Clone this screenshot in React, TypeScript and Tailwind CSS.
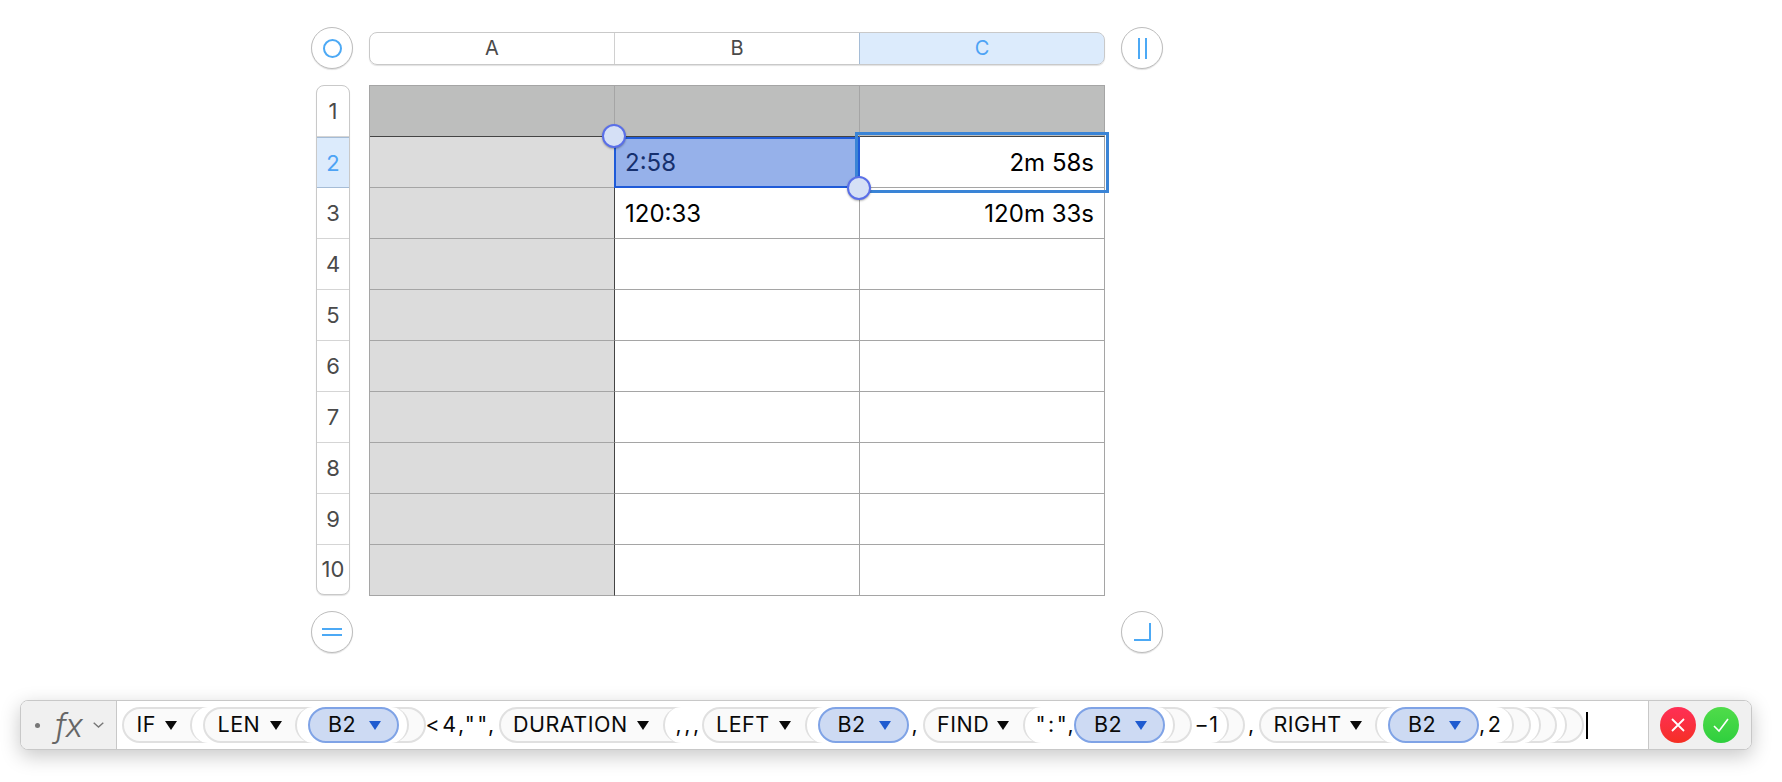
import type { ReactNode } from "react";

const rows = [1, 2, 3, 4, 5, 6, 7, 8, 9, 10];

function RoundButton({ children }: { children: ReactNode }) {
  return (
    <div className="flex h-[42px] w-[42px] items-center justify-center rounded-full border-[1.5px] border-[#bdbdbd] bg-white shadow-[0_1px_1px_rgba(0,0,0,0.12)]">
      {children}
    </div>
  );
}

function Arrow({ blue }: { blue?: boolean }) {
  return (
    <svg width="12" height="9" viewBox="0 0 12 9" className="shrink-0">
      <path d="M0 0H12L6 9Z" fill={blue ? "#1f5bd0" : "#0a0a0a"} />
    </svg>
  );
}

function Ref() {
  return (
    <div className="flex h-9 w-[91px] shrink-0 items-center rounded-full border-2 border-[#7fa3e6] bg-[#cddaf3] pl-[18px]">
      <span className="pb-[2px]">B2</span>
      <span className="ml-[13px]">
        <Arrow blue />
      </span>
    </div>
  );
}

// width is a full class so the head of each function lines up with the picture
function Fn({ name, width, children }: { name: string; width: string; children: ReactNode }) {
  return (
    <div className="flex h-9 shrink-0 items-center rounded-full border-2 border-[#e0e0e0] bg-[#fafafa] pl-[12.5px] pr-[14.5px]">
      <span className={`${width} whitespace-nowrap pb-[2px]`}>{name}</span>
      <span className="ml-3">
        <Arrow />
      </span>
      <div className="ml-[13.5px] flex h-9 items-center rounded-full border-x-2 border-[#e0e0e0] bg-white pl-[11px] pr-[8px]">
        {children}
      </div>
    </div>
  );
}

function Lit({ width, children }: { width: string; children: ReactNode }) {
  return <span className={`${width} shrink-0 whitespace-nowrap pb-[2px] tracking-[2.5px]`}>{children}</span>;
}

export default function App() {
  return (
    <div className="h-[782px] w-full overflow-hidden bg-white pt-[27px] font-['Inter','Liberation_Sans',sans-serif]">
      <div className="ml-[311px] grid w-[852px] grid-cols-[42px_736px_42px] gap-x-4">
        <RoundButton>
          <div className="h-[19px] w-[19px] rounded-full border-2 border-[#4ca9f5]" />
        </RoundButton>
        <div className="flex h-[33px] self-center overflow-hidden rounded-lg border border-[#c9c9c9] text-[20px] text-[#4a4a4a] shadow-[0_1px_1px_rgba(0,0,0,0.12)]">
          <div className="flex flex-1 items-center justify-center border-r border-[#d0d0d0]">A</div>
          <div className="flex flex-1 items-center justify-center">B</div>
          <div className="-my-px -mr-px flex flex-1 items-center justify-center rounded-r-lg border border-[#a5bcd6] bg-[#dcebfc] text-[#4da3f5]">
            C
          </div>
        </div>
        <RoundButton>
          <div className="flex h-[21px] gap-[5px]">
            <div className="w-[2px] bg-[#4ca9f5]" />
            <div className="w-[2px] bg-[#4ca9f5]" />
          </div>
        </RoundButton>

        <div className="ml-[5px] mt-4 w-[34px]">
          <div className="overflow-hidden rounded-lg border border-[#c9c9c9] bg-white text-[22px] text-[#4a4a4a] shadow-[0_1px_1px_rgba(0,0,0,0.12)]">
            {rows.map((r) =>
              r === 2 ? (
                <div
                  key={r}
                  className="-mx-px flex h-[51px] items-center justify-center border border-[#a5bcd6] bg-[#dcebfc] pt-[1px] text-[#4da3f5]"
                >
                  {r}
                </div>
              ) : (
                <div
                  key={r}
                  className="flex h-[51px] items-center justify-center border-b border-[#d5d5d5] last:h-[49px] last:border-b-0"
                >
                  {r}
                </div>
              ),
            )}
          </div>
        </div>

        <div className="relative mt-4 grid grid-cols-[245px_245px_245px] grid-rows-[repeat(10,51px)] border-l border-t border-[#a5a5a5] text-[24px] text-black">
          {rows.map((r) => (
            <div key={r} className="contents">
              <div
                className={
                  r === 1
                    ? "border-b border-r border-b-[#444] border-r-[#a5a5a5] bg-[#bdbebd]"
                    : "border-b border-r border-b-[#a5a5a5] border-r-[#444] bg-[#dcdcdc]"
                }
              />
              {r === 1 ? (
                <>
                  <div className="border-b border-r border-b-[#444] border-r-[#a5a5a5] bg-[#bdbebd]" />
                  <div className="border-b border-r border-b-[#444] border-r-[#a5a5a5] bg-[#bdbebd]" />
                </>
              ) : r === 2 ? (
                <>
                  <div className="-ml-px flex items-center border-2 border-[#1f5bd8] bg-[#96b1ea] pl-[9px] pt-[1px] text-[#16306e]">
                    2:58
                  </div>
                  <div className="flex items-center justify-end border-b border-r border-[#a5a5a5] pr-[10px] pt-[2px]">
                    2m 58s
                  </div>
                </>
              ) : (
                <>
                  <div className="flex items-center border-b border-r border-[#a5a5a5] pl-[10px] pt-[2px]">
                    {r === 3 ? "120:33" : ""}
                  </div>
                  <div className="flex items-center justify-end border-b border-r border-[#a5a5a5] pr-[10px] pt-[2px]">
                    {r === 3 ? "120m 33s" : ""}
                  </div>
                </>
              )}
            </div>
          ))}
          <div className="absolute left-[485px] top-[46px] h-[61px] w-[254px] border-[3px] border-[#3a84d6]" />
          <div className="absolute left-[232px] top-[38px] h-6 w-6 rounded-full border-2 border-[#5a6fe8] bg-[#d5e0f6] shadow-[0_1px_2px_rgba(0,0,0,0.3)]" />
          <div className="absolute left-[477px] top-[90px] h-6 w-6 rounded-full border-2 border-[#5a6fe8] bg-[#d5e0f6] shadow-[0_1px_2px_rgba(0,0,0,0.3)]" />
        </div>
        <div />

        <div className="mt-[15px]">
          <RoundButton>
            <div className="flex flex-col gap-1">
              <div className="h-[2px] w-5 bg-[#4ca9f5]" />
              <div className="h-[2px] w-5 bg-[#4ca9f5]" />
            </div>
          </RoundButton>
        </div>
        <div />
        <div className="mt-[15px]">
          <RoundButton>
            <div className="h-[18px] w-[17px] border-b-2 border-r-2 border-[#4ca9f5]" />
          </RoundButton>
        </div>
      </div>

      <div className="ml-5 mt-[47px] flex h-[50px] w-[1732px] overflow-hidden rounded-lg border border-[#c8c8c8] bg-white text-[21.5px] tracking-[0.5px] text-[#0a0a0a] shadow-[0_6px_20px_rgba(0,0,0,0.22)]">
        <div className="flex w-[96px] shrink-0 items-center border-r border-[#c8c8c8] bg-[#f0f0f0] pl-[14px]">
          <div className="h-[5px] w-[5px] rounded-full bg-[#777]" />
          <span className="ml-[15px] text-[33px] font-light italic leading-none tracking-[-1px] text-[#666]">
            fx
          </span>
          <svg width="11" height="6" viewBox="0 0 11 6" className="ml-[11px]">
            <path d="M0.7 0.7L5.5 5L10.3 0.7" fill="none" stroke="#777" strokeWidth="1.4" />
          </svg>
        </div>
        <div className="flex min-w-0 flex-1 items-center pl-[5px]">
          <Fn name="IF" width="w-[16px]">
            <Fn name="LEN" width="w-[40px]">
              <Ref />
            </Fn>
            <Lit width="w-[73px]">{'<4,"",'}</Lit>
            <Fn name="DURATION" width="w-[112px]">
              <Lit width="w-[26px]">,,,</Lit>
              <Fn name="LEFT" width="w-[51px]">
                <Ref />
                <Lit width="w-[14px] pl-[3px]">,</Lit>
                <Fn name="FIND" width="w-[48px]">
                  <Lit width="w-[38.5px]">{'":",'}</Lit>
                  <Ref />
                </Fn>
                <span className="w-[27px] shrink-0 pb-[2px] pl-[3px]">−1</span>
              </Fn>
              <Lit width="w-[14px] pl-[3px]">,</Lit>
              <Fn name="RIGHT" width="w-[64px]">
                <Ref />
                <Lit width="w-[25px]">,2</Lit>
              </Fn>
            </Fn>
          </Fn>
          <div className="ml-[2px] h-[27px] w-[2px] shrink-0 bg-black" />
        </div>
        <div className="flex w-[103px] shrink-0 items-center gap-[7px] border-l border-[#c8c8c8] bg-[#f0f0f0] pl-[11px]">
          <div className="flex h-9 w-9 items-center justify-center rounded-full bg-gradient-to-b from-[#ff2f55] to-[#f52f22]">
            <svg width="16" height="16" viewBox="0 0 16 16">
              <path d="M2 2L14 14M14 2L2 14" stroke="white" strokeWidth="1.8" />
            </svg>
          </div>
          <div className="flex h-9 w-9 items-center justify-center rounded-full bg-gradient-to-b from-[#4fdc4a] to-[#2ecf3e]">
            <svg width="18" height="16" viewBox="0 0 18 16">
              <path d="M2 9L7 14L16 2" fill="none" stroke="white" strokeWidth="1.6" />
            </svg>
          </div>
        </div>
      </div>
    </div>
  );
}
